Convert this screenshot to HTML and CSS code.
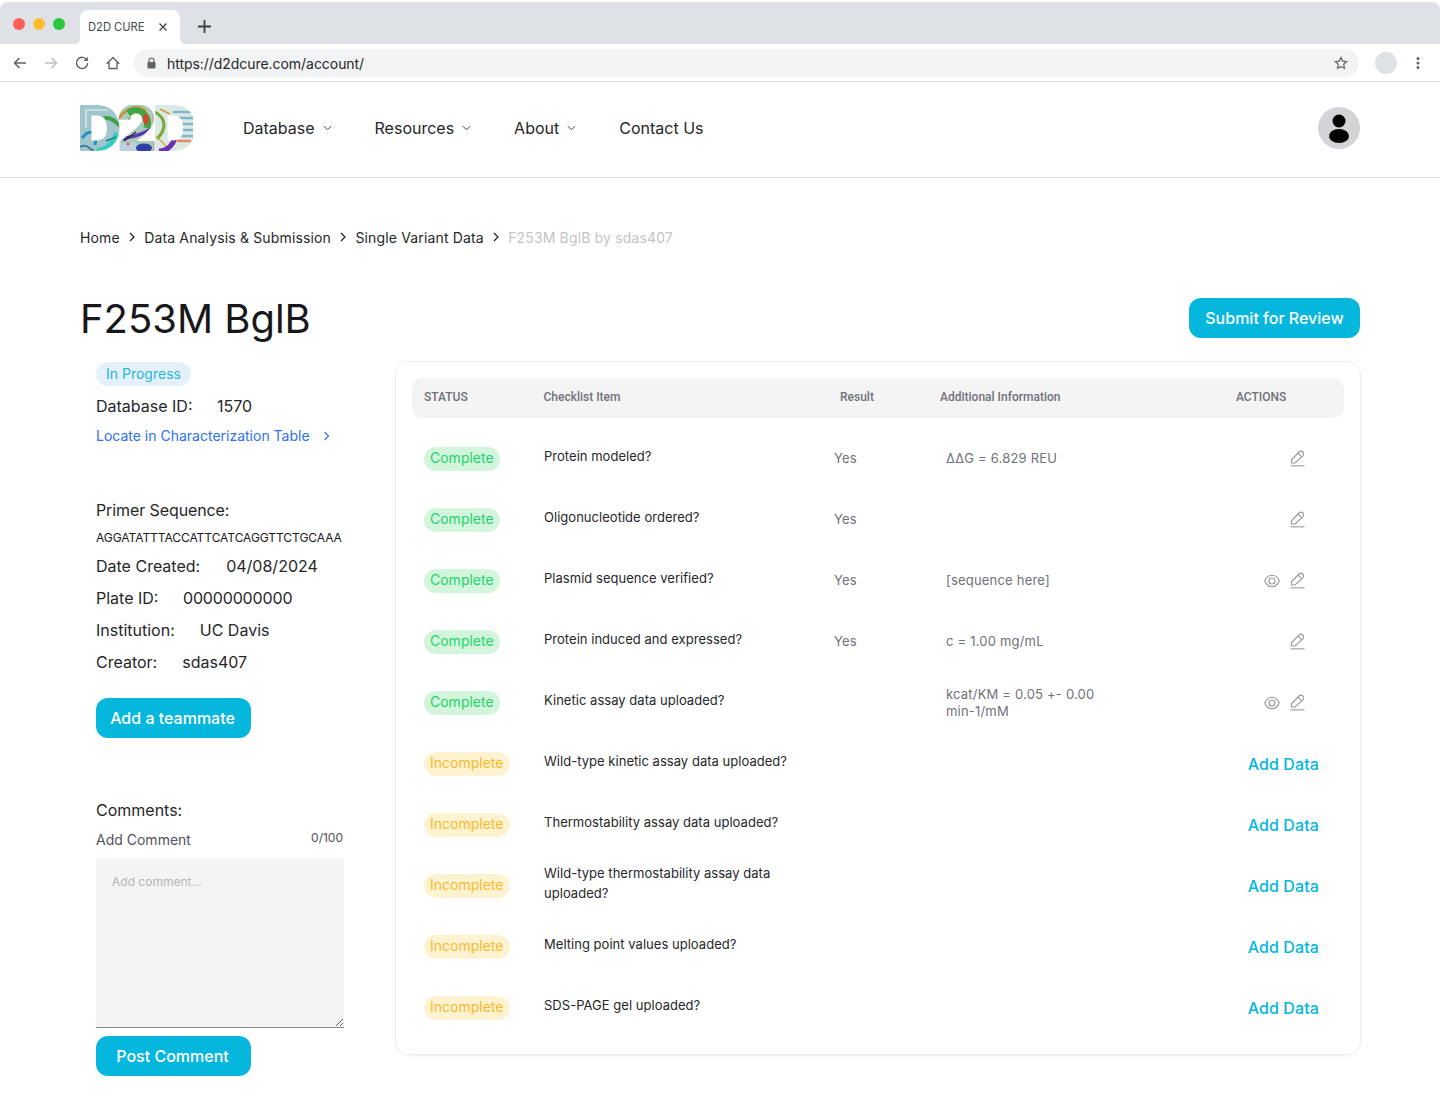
FILE: index.html
```html
<!DOCTYPE html>
<html lang="en">
<head>
<meta charset="utf-8">
<title>D2D CURE</title>
<link rel="stylesheet" href="styles.css">
</head>
<body>
<svg class="defs" width="0" height="0">
  <defs>
    <symbol id="pen" viewBox="0 0 15 17"><path d="M1.500 13V9.800L9 2c1.100-1.100 2.700-1.100 3.800 0s1.100 2.700 0 3.800L5 13z" stroke="#96969f" stroke-width="1.100" fill="none"/><path d="M8 3.100l3.800 3.800" stroke="#96969f" stroke-width="1.100" fill="none"/><path d="M0.500 15.800h14" stroke="#a9a9b1" stroke-width="1.300" fill="none"/></symbol>
    <symbol id="eye" viewBox="0 0 16 14"><path d="M.7 7C2.300 3.200 5 1.300 8 1.300S13.700 3.200 15.300 7C13.700 10.800 11 12.700 8 12.700S2.300 10.800.7 7z" stroke="#96969f" stroke-width="1.100" fill="none"/><circle cx="8" cy="7" r="3" stroke="#96969f" stroke-width="1.100" fill="none"/></symbol>
    <symbol id="chev" viewBox="0 0 10 6"><path d="M1 1l4 4 4-4" stroke="#3f3f46" stroke-width="1.100" fill="none"/></symbol>
    <symbol id="crumb" viewBox="0 0 6 10"><path d="M1 1l4 4-4 4" stroke="#222" stroke-width="1.200" fill="none"/></symbol>
    <clipPath id="logo-clip"><text class="logo-text" x="-4" y="45.500">D2D</text></clipPath>
  </defs>
</svg>
<div class="browser">
  <div class="tabstrip">
    <div class="lights"><i class="light red"></i><i class="light yellow"></i><i class="light green"></i></div>
    <div class="tab"><span>D2D CURE</span>
      <svg width="10" height="10" viewBox="0 0 10 10"><path d="M1.500 1.500l7 7M8.500 1.500l-7 7" stroke="#3c4043" stroke-width="1.200" fill="none"/></svg>
    </div>
    <svg class="tab-new" width="13" height="13" viewBox="0 0 13 13"><path d="M6.500 0v13M0 6.500h13" stroke="#3c4043" stroke-width="1.800" fill="none"/></svg>
  </div>
  <div class="toolbar">
    <svg class="tb-icon" width="14" height="14" viewBox="0 0 14 14"><path d="M13 7H1.500M6.500 2L1.500 7l5 5" stroke="#5f6368" stroke-width="1.500" fill="none"/></svg>
    <svg class="tb-icon" width="14" height="14" viewBox="0 0 14 14"><path d="M1 7h11.500M7.500 2l5 5-5 5" stroke="#bdc1c6" stroke-width="1.500" fill="none"/></svg>
    <svg class="tb-icon" width="14" height="14" viewBox="0 0 14 14"><path d="M12 4.200A5.600 5.600 0 1 0 12.700 7" stroke="#5f6368" stroke-width="1.400" fill="none"/><path d="M12.800 0.800v4.300H8.500z" fill="#5f6368"/></svg>
    <svg class="tb-icon" width="14" height="14" viewBox="0 0 14 14"><path d="M7 1.500L1.500 7H3v5.500h8V7h1.500z" stroke="#5f6368" stroke-width="1.300" fill="none"/></svg>
    <div class="omnibox">
      <svg width="9" height="12" viewBox="0 0 9 12"><path d="M2 5V3.500a2.500 2.500 0 0 1 5 0V5" stroke="#5f6368" stroke-width="1.200" fill="none"/><rect x="0.500" y="5" width="8" height="6.500" rx="1" fill="#5f6368"/></svg>
      <span class="url">https://d2dcure.com/account/</span>
      <svg width="14" height="14" viewBox="0 0 14 14"><path d="M7 1.500l1.700 3.600 3.900.5-2.900 2.700.8 3.900L7 10.700l-3.500 1.500.8-3.900L1.400 5.600l3.900-.5z" stroke="#5f6368" stroke-width="1.200" fill="none"/></svg>
    </div>
    <i class="profile"></i>
    <svg class="kebab" width="4" height="14" viewBox="0 0 4 14"><circle cx="2" cy="2.500" r="1.500" fill="#5f6368"/><circle cx="2" cy="7" r="1.500" fill="#5f6368"/><circle cx="2" cy="11.500" r="1.500" fill="#5f6368"/></svg>
  </div>
</div>

<header class="site-header">
  <svg class="logo" width="113" height="46" viewBox="0 0 113 46" role="img" aria-label="D2D">
    <g clip-path="url(#logo-clip)" fill="none">
      <rect x="0" y="0" width="38" height="46" fill="#a0c6cd"/>
      <rect x="38" y="0" width="36" height="46" fill="#a9cbb8"/>
      <rect x="74" y="0" width="39" height="46" fill="#dbe9e6"/>
      <path d="M6 5h22M6 5v18" stroke="#d6e6e9" stroke-width="1.500"/>
      <path d="M2 33C9 24 18 25 15 40" stroke="#2a8fc2" stroke-width="3"/>
      <path d="M0 42C7 38 9 44 14 46" stroke="#3c7ea0" stroke-width="2"/>
      <path d="M17 45C27 46 33 38 37 28" stroke="#35cfc2" stroke-width="5"/>
      <path d="M18 17C28 8 36 16 44 25" stroke="#3aa14b" stroke-width="4"/>
      <path d="M26 36L36 32" stroke="#1c7f8f" stroke-width="1.500"/>
      <path d="M38 14C48 1 58 0 66 6" stroke="#cf8a31" stroke-width="2.500"/>
      <path d="M48 8C58 2 70 10 67 23" stroke="#3ea642" stroke-width="7"/>
      <path d="M40 20C50 16 52 12 56 8" stroke="#6eb04a" stroke-width="3"/>
      <ellipse cx="66" cy="14" rx="3" ry="5.500" fill="#d4482a"/>
      <path d="M40 34C52 32 62 30 73 23" stroke="#5a38b0" stroke-width="3.500"/>
      <path d="M44 36L56 27" stroke="#26262e" stroke-width="1.500"/>
      <rect x="38" y="38" width="18" height="8" fill="#bcd2e0"/>
      <ellipse cx="64" cy="43" rx="8" ry="4.500" fill="#2f3fa8"/>
      <circle cx="48" cy="39" r="1.500" fill="#d9585c"/>
      <path d="M74 0V46" stroke="#e07d70" stroke-width=".8"/>
      <path d="M75 7C86 13 87 24 77 34" stroke="#7aa83a" stroke-width="3"/>
      <path d="M80 4L90 9" stroke="#d49a3a" stroke-width="1.500"/>
      <path d="M76 31L88 43" stroke="#c9b23a" stroke-width="1.500"/>
      <path d="M79 46C90 46 95 36 97 26" stroke="#6c2fb0" stroke-width="5"/>
      <path d="M93 7h20M93 13h20M93 19h20M93 25h20M93 31h20" stroke="#7fb6c9" stroke-width="2.500"/>
      <path d="M97 36h14" stroke="#e58b5a" stroke-width="2.500"/>
      <path d="M97 41h14" stroke="#dfe6d8" stroke-width="2.500"/>
    </g>
  </svg>
  <nav class="nav">
    <a>Database <svg width="9" height="6"><use href="#chev"/></svg></a>
    <a>Resources <svg width="9" height="6"><use href="#chev"/></svg></a>
    <a>About <svg width="9" height="6"><use href="#chev"/></svg></a>
    <a>Contact Us</a>
  </nav>
  <div class="avatar"><svg width="20" height="29" viewBox="0 0 20 29"><circle cx="10" cy="7" r="6.500" fill="#000"/><ellipse cx="10" cy="22" rx="10" ry="7" fill="#000"/></svg></div>
</header>

<main class="page">
  <div class="crumbs">
    <a>Home</a><svg width="6" height="10"><use href="#crumb"/></svg>
    <a>Data Analysis &amp; Submission</a><svg width="6" height="10"><use href="#crumb"/></svg>
    <a>Single Variant Data</a><svg width="6" height="10"><use href="#crumb"/></svg>
    <span class="crumb-current">F253M BglB by sdas407</span>
  </div>

  <div class="title-row">
    <h1>F253M BglB</h1>
    <button class="btn btn-submit">Submit for Review</button>
  </div>

  <div class="columns">
    <aside class="side">
      <span class="pill pill-progress">In Progress</span>
      <div class="kv kv-id"><span>Database ID:</span><span>1570</span></div>
      <a class="locate">Locate in Characterization Table <svg width="7" height="10" viewBox="0 0 7 10"><path d="M1.500 1l4 4-4 4" stroke="#2f6ff0" stroke-width="1.100" fill="none"/></svg></a>
      <div class="kv primer-label">Primer Sequence:</div>
      <div class="seq">AGGATATTTACCATTCATCAGGTTCTGCAAA</div>
      <div class="kv kv-row kv-date"><span>Date Created:</span><span>04/08/2024</span></div>
      <div class="kv kv-row kv-plate"><span>Plate ID:</span><span class="plate-value">00000000000</span></div>
      <div class="kv kv-row"><span>Institution:</span><span>UC Davis</span></div>
      <div class="kv kv-row"><span>Creator:</span><span>sdas407</span></div>
      <button class="btn btn-team">Add a teammate</button>
      <div class="kv comments-label">Comments:</div>
      <div class="comment-head"><span class="add-label">Add Comment</span><span class="count">0/100</span></div>
      <textarea class="comment-box" placeholder="Add comment..."></textarea>
      <button class="btn btn-post">Post Comment</button>
    </aside>

    <section class="card">
      <div class="thead">
        <span>STATUS</span><span>Checklist Item</span><span>Result</span><span>Additional Information</span><span>ACTIONS</span>
      </div>
      <div class="rows">
        <div class="row">
          <span class="pill pill-ok">Complete</span><span class="item">Protein modeled?</span><span class="res">Yes</span><span class="info">ΔΔG = 6.829 REU</span>
          <span class="acts"><svg class="ic-pen"><use href="#pen"/></svg></span>
        </div>
        <div class="row">
          <span class="pill pill-ok">Complete</span><span class="item">Oligonucleotide ordered?</span><span class="res">Yes</span><span class="info"></span>
          <span class="acts"><svg class="ic-pen"><use href="#pen"/></svg></span>
        </div>
        <div class="row">
          <span class="pill pill-ok">Complete</span><span class="item">Plasmid sequence verified?</span><span class="res">Yes</span><span class="info">[sequence here]</span>
          <span class="acts"><svg class="ic-eye"><use href="#eye"/></svg><svg class="ic-pen"><use href="#pen"/></svg></span>
        </div>
        <div class="row">
          <span class="pill pill-ok">Complete</span><span class="item">Protein induced and expressed?</span><span class="res">Yes</span><span class="info">c = 1.00 mg/mL</span>
          <span class="acts"><svg class="ic-pen"><use href="#pen"/></svg></span>
        </div>
        <div class="row">
          <span class="pill pill-ok">Complete</span><span class="item">Kinetic assay data uploaded?</span><span class="res"></span><span class="info info-tight">kcat/KM = 0.05 +- 0.00<br>min-1/mM</span>
          <span class="acts"><svg class="ic-eye"><use href="#eye"/></svg><svg class="ic-pen"><use href="#pen"/></svg></span>
        </div>
        <div class="row">
          <span class="pill pill-warn">Incomplete</span><span class="item">Wild-type kinetic assay data uploaded?</span><span class="res"></span><span class="info"></span><a class="add">Add Data</a>
        </div>
        <div class="row">
          <span class="pill pill-warn">Incomplete</span><span class="item">Thermostability assay data uploaded?</span><span class="res"></span><span class="info"></span><a class="add">Add Data</a>
        </div>
        <div class="row">
          <span class="pill pill-warn">Incomplete</span><span class="item">Wild-type thermostability assay data uploaded?</span><span class="res"></span><span class="info"></span><a class="add">Add Data</a>
        </div>
        <div class="row">
          <span class="pill pill-warn">Incomplete</span><span class="item">Melting point values uploaded?</span><span class="res"></span><span class="info"></span><a class="add">Add Data</a>
        </div>
        <div class="row">
          <span class="pill pill-warn">Incomplete</span><span class="item">SDS-PAGE gel uploaded?</span><span class="res"></span><span class="info"></span><a class="add">Add Data</a>
        </div>
      </div>
    </section>
  </div>
</main>
</body>
</html>
```
FILE: styles.css
```css
* { box-sizing: border-box; }
html, body { margin: 0; padding: 0; background: #fff; }
body { font-family: Inter, "Liberation Sans", sans-serif; color: #18181b; }
svg { display: block; flex: none; }
.defs { position: absolute; }

.browser { padding-top: 2px; }
.tabstrip { height: 42px; background: #dee1e6; border-radius: 8px 8px 0 0; display: flex; align-items: flex-end; padding-left: 80px; position: relative; }
.lights { position: absolute; left: 13px; top: 16px; display: flex; gap: 8px; }
.light { width: 12px; height: 12px; border-radius: 50%; display: block; }
.red { background: #ff5f57; }
.yellow { background: #febc2e; }
.green { background: #28c840; }
.tab { position: relative; width: 100px; height: 34px; background: #fff; border-radius: 8px 8px 0 0; display: flex; align-items: center; justify-content: space-between; padding: 0 12px 0 8px; font-size: 11.200px; color: #45494e; }
.tab::before, .tab::after { content: ""; position: absolute; bottom: 0; width: 6px; height: 6px; }
.tab::before { left: -6px; background: radial-gradient(circle at 0 0, transparent 6px, #fff 6.500px); }
.tab::after { right: -6px; background: radial-gradient(circle at 100% 0, transparent 6px, #fff 6.500px); }
.tab-new { margin: 0 0 11px 18px; }
.toolbar { height: 38px; padding: 5px 0 0 0; border-bottom: 1px solid #dcdcdc; display: flex; align-items: flex-start; }
.tb-icon { margin: 7px 3px 0 13px; }
.toolbar .tb-icon + .tb-icon { margin-left: 14px; }
.omnibox { height: 28px; width: 1225px; margin-left: 11px; background: #f1f3f4; border-radius: 14px; display: flex; align-items: center; padding: 0 11px 0 13px; font-size: 14px; color: #26282b; gap: 11px; }
.url { flex: 1; letter-spacing: -.05px; }
.profile { display: block; width: 22px; height: 22px; margin: 3px 0 0 16px; border-radius: 50%; background: #dee1e6; }
.kebab { margin: 7px 0 0 19px; }

.site-header { height: 96px; border-bottom: 1px solid #e4e4e7; display: flex; align-items: center; padding: 0 80px 3px; }
.logo { margin-right: 50px; }
.logo-text { font-family: Inter, sans-serif; font-weight: 900; font-size: 63px; letter-spacing: -5px; }
.nav { display: flex; gap: 43px; font-size: 16px; color: #27272a; }
.nav a { display: flex; align-items: center; gap: 8px; }
.avatar { margin-left: auto; width: 42px; height: 42px; border-radius: 50%; background: #d4d4d8; display: flex; align-items: center; justify-content: center; }

.page { padding: 0 80px; }
.crumbs { display: flex; align-items: center; gap: 9.200px; padding-top: 51px; height: 67px; font-size: 14px; color: #27272a; letter-spacing: .15px; }
.crumb-current { color: #c4c4c8; }
.title-row { display: flex; justify-content: space-between; align-items: center; margin-top: 53px; height: 40px; }
h1 { margin: 2px 0 0; font-weight: 400; font-size: 40px; line-height: 40px; color: #18181b; letter-spacing: -.03px; }
.btn { border: 0; border-radius: 12px; background: #05b6dd; color: #fff; font-family: Inter, sans-serif; font-size: 16px; font-weight: 450; height: 40px; padding: 0; }
.btn-submit { width: 171px; }
.columns { display: flex; align-items: flex-start; margin-top: 23px; padding-left: 16px; }
.side { width: 248px; flex: none; display: flex; flex-direction: column; align-items: flex-start; padding-top: 1px; }
.pill { display: inline-flex; align-items: center; height: 24px; border-radius: 12px; padding: 0 6px 2px; font-size: 14px; justify-self: start; }
.pill-progress { background: #e4f1fb; color: #2bb5d9; padding: 0 10px 1px; }
.pill-ok { background: #d3f5dc; color: #22d46e; }
.pill-warn { background: #fef3d1; color: #fbb92c; padding-right: 7px; }
.kv { font-size: 16px; line-height: 24px; color: #27272a; }
.kv-id { margin-top: 8px; display: flex; gap: 24.500px; }
.locate { margin-top: 6px; font-size: 14px; line-height: 24px; color: #2f6ff0; display: flex; align-items: center; gap: 13px; }
.primer-label { margin-top: 50px; letter-spacing: -.1px; }
.seq { margin-top: 8px; font-size: 12px; line-height: 16px; color: #18181b; letter-spacing: -.06px; }
.kv-row { display: flex; gap: 25px; width: 100%; margin-top: 8px; }
.kv-date { gap: 26px; }
.plate-value { letter-spacing: -.15px; margin-left: -.5px; }
.btn-team { width: 155px; margin-top: 24px; padding-right: 2px; }
.comments-label { margin-top: 60px; }
.comment-head { width: 100%; display: flex; justify-content: space-between; align-items: flex-start; margin-top: 8px; }
.add-label { font-size: 14px; line-height: 20px; color: #52525b; }
.count { font-size: 12px; line-height: 16px; color: #52525b; padding-right: 1px; }
.comment-box { display: block; width: 100%; height: 170px; margin-top: 8px; padding: 16px; border: 0; border-bottom: 1px solid #8a8a8a; background: #f4f4f4; font-family: Inter, sans-serif; font-size: 12px; line-height: 16px; outline: 0; }
.comment-box::placeholder { color: #b5b5b5; }
.btn-post { width: 155px; margin-top: 8px; padding-right: 2px; }

.card { width: 966px; margin-left: 51px; height: 694px; padding: 16px; border: 1px solid #ececee; border-radius: 14px; box-shadow: 0 1px 3px rgba(0,0,0,.05); flex: none; }
.thead { height: 40px; background: #f4f4f5; border-radius: 10px; display: grid; grid-template-columns: 119.500px 296.500px 100px 296px 1fr; align-items: center; padding: 0 0 2px 12px; font-family: Roboto, sans-serif; font-size: 12px; font-weight: 500; color: #71717a; }
.rows { padding-top: 10px; }
.row { display: grid; grid-template-columns: 120px 290px 112px 250px 1fr; height: 61px; align-items: center; padding-left: 12px; }
.item { font-size: 13px; line-height: 20px; color: #27272a; padding-right: 20px; margin-top: -6px; letter-spacing: .03px; }
.res, .info { font-size: 13px; color: #71717a; letter-spacing: .2px; margin-top: -2px; }
.info { line-height: 20px; }
.info-tight { line-height: 17px; margin-top: 0; }
.acts { display: flex; justify-content: flex-end; align-items: center; gap: 10px; padding-right: 39.500px; }
.ic-pen { width: 15px; height: 17px; }
.ic-eye { width: 16px; height: 14px; }
.add { justify-self: end; margin-right: 25px; font-size: 16px; font-weight: 450; color: #05b6dd; letter-spacing: .1px; }
```
